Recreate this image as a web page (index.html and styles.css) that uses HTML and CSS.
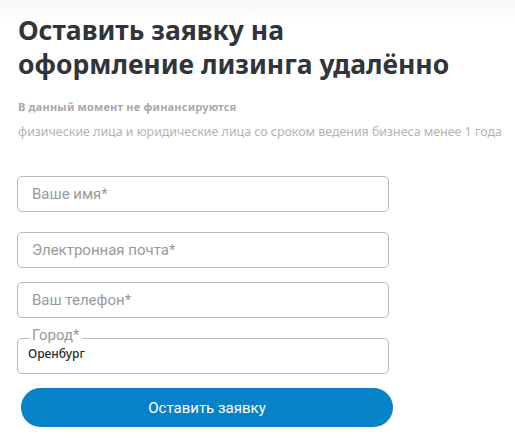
FILE: index.html
```html
<html>
<head>
	<meta charset="utf-8">
	<title>Заявка на лизинг</title>
	<link rel="stylesheet" href="styles.css">
</head>
<body>
	<section class="form-wrap">
		<h1 class="title">Оставить заявку на<br>оформление лизинга удалённо</h1>
		<p class="note-head">В данный момент не финансируются</p>
		<p class="note">физические лица и юридические лица со сроком ведения бизнеса менее 1 года</p>
		<form class="lead-form">
			<input class="field field-name" type="text" placeholder="Ваше имя*">
			<input class="field field-mail" type="text" placeholder="Электронная почта*">
			<input class="field field-phone" type="text" placeholder="Ваш телефон*">
			<fieldset class="city">
				<legend>Город*</legend>
				<div class="city-value">Оренбург</div>
			</fieldset>
			<button class="send" type="button">Оставить заявку</button>
		</form>
	</section>
</body>
</html>
```

FILE: styles.css
```css
body {
	margin: 0;
	background: linear-gradient(#f7f7f7, #fff 22px);
	font-family: "Noto Sans", "Open Sans", sans-serif;
}
.form-wrap {
	padding: 13px 0 0 17px;
}
.title {
	margin: 0 0 0 1px;
	font-size: 26.5px;
	line-height: 34px;
	font-weight: 700;
	color: #2f353b;
}
.note-head {
	margin: 18px 0 0 1px;
	font-size: 11px;
	font-weight: 700;
	letter-spacing: 0.2px;
	color: #a9a9a9;
}
.note {
	margin: 9px 0 0 1px;
	font-size: 12.4px;
	color: #b3b3b3;
}
.lead-form {
	width: 372px;
	margin-top: 36px;
}
.field {
	display: block;
	box-sizing: border-box;
	width: 372px;
	height: 36px;
	padding: 0 14px;
	border: 1px solid #bababa;
	border-radius: 5px;
	font-family: "Roboto", sans-serif;
	font-size: 15px;
	color: #333;
	outline: none;
}
.field::placeholder {
	color: #9a9a9a;
}
.field-mail {
	margin-top: 20px;
}
.field-phone {
	margin-top: 14px;
}
.city {
	box-sizing: border-box;
	width: 372px;
	height: 47px;
	margin: 9px 0 0;
	padding: 0 10px;
	border: 1px solid #bababa;
	border-radius: 5px;
}
.city legend {
	padding: 0 3px 6px;
	margin-left: 1px;
	font-family: "Roboto", sans-serif;
	font-size: 15px;
	line-height: 16px;
	color: #9a9a9a;
}
.city-value {
	margin-top: -3px;
	font-size: 12px;
	line-height: 16px;
	font-weight: 500;
	color: #2a2a2a;
}
.send {
	display: block;
	width: 372px;
	height: 39px;
	margin: 14px 0 0 4px;
	border: none;
	border-radius: 20px;
	background-color: #0782c9;
	color: #fff;
	font-family: "Roboto", sans-serif;
	font-size: 15px;
}
```
